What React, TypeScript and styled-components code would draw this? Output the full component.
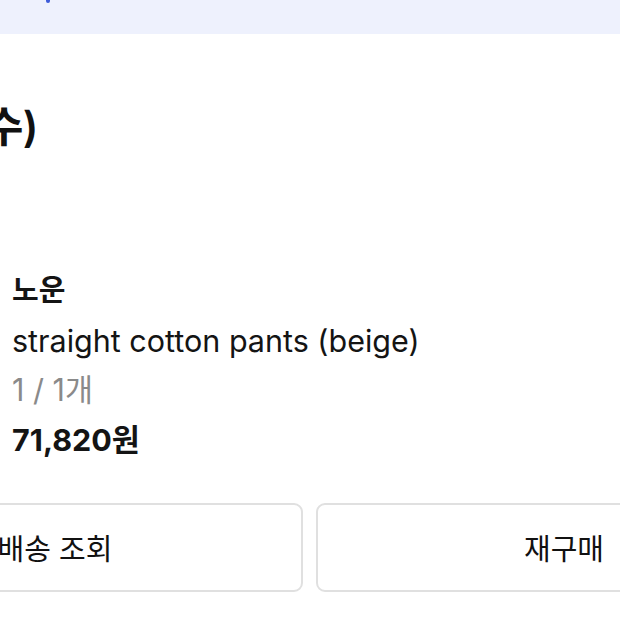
import React from "react";
import styled, { createGlobalStyle } from "styled-components";

const Global = createGlobalStyle`
  html, body {
    margin: 0;
    padding: 0;
    background: #ffffff;
    overflow: hidden;
  }
  body {
    font-family: Inter, "Noto Sans CJK KR", "Noto Sans", sans-serif;
    color: #111111;
    -webkit-font-smoothing: antialiased;
  }
`;

const Page = styled.div`
  width: 1005px;
  margin-left: -193px;
  display: flex;
  flex-direction: column;
`;

const Banner = styled.div`
  height: 34px;
  width: 1400px;
  margin-left: -200px;
  background: #eef1fd;
  position: relative;
  overflow: hidden;
`;

const BannerMark = styled.span`
  position: absolute;
  left: 439px;
  top: -2px;
  width: 4px;
  height: 5px;
  border-radius: 2px;
  background: #3d5bd9;
`;

const Section = styled.section`
  display: flex;
  flex-direction: column;
  padding-top: 64px;
`;

const TitleRow = styled.div`
  width: 231px;
  display: flex;
  justify-content: flex-end;
`;

const Title = styled.h2`
  margin: 0;
  font-size: 42px;
  font-weight: 600;
  line-height: 58px;
  white-space: nowrap;
  letter-spacing: -0.5px;
`;

const ProductRow = styled.div`
  display: grid;
  grid-template-columns: 180px 1fr;
  column-gap: 25px;
  margin-top: 117px;
`;

const Thumb = styled.div`
  width: 180px;
  height: 180px;
  border-radius: 8px;
  background: #e9e4da;
`;

const Info = styled.div`
  display: flex;
  flex-direction: column;
  gap: 13.5px;
`;

const Line = styled.div<{ $tone?: "muted"; $bold?: boolean; $size?: number }>`
  font-size: ${(p) => p.$size ?? 30.5}px;
  font-weight: ${(p) => (p.$bold ? 700 : 400)};
  line-height: 36px;
  color: ${(p) => (p.$tone === "muted" ? "#8a8a8a" : "#141414")};
  white-space: nowrap;
`;

const Actions = styled.div`
  display: grid;
  grid-template-columns: 1fr 1fr;
  gap: 13px;
  margin-top: 45px;
`;

const ActionButton = styled.button`
  height: 89px;
  border: 2px solid #e0e0e0;
  border-radius: 9px;
  background: #ffffff;
  font-family: inherit;
  font-size: 29px;
  font-weight: 400;
  color: #111111;
  display: flex;
  align-items: center;
  justify-content: center;
  padding: 0;
`;

export default function App() {
  return (
    <>
      <Global />
      <Page>
        <Banner>
          <BannerMark />
        </Banner>
        <Section>
          <TitleRow>
            <Title>주문 상품 (필수)</Title>
          </TitleRow>
          <ProductRow>
            <Thumb />
            <Info>
              <Line $bold $size={29}>노운</Line>
              <Line>straight cotton pants (beige)</Line>
              <Line $tone="muted">1 / 1개</Line>
              <Line $bold $size={30.5}>71,820원</Line>
            </Info>
          </ProductRow>
          <Actions>
            <ActionButton>배송 조회</ActionButton>
            <ActionButton>재구매</ActionButton>
          </Actions>
        </Section>
      </Page>
    </>
  );
}
